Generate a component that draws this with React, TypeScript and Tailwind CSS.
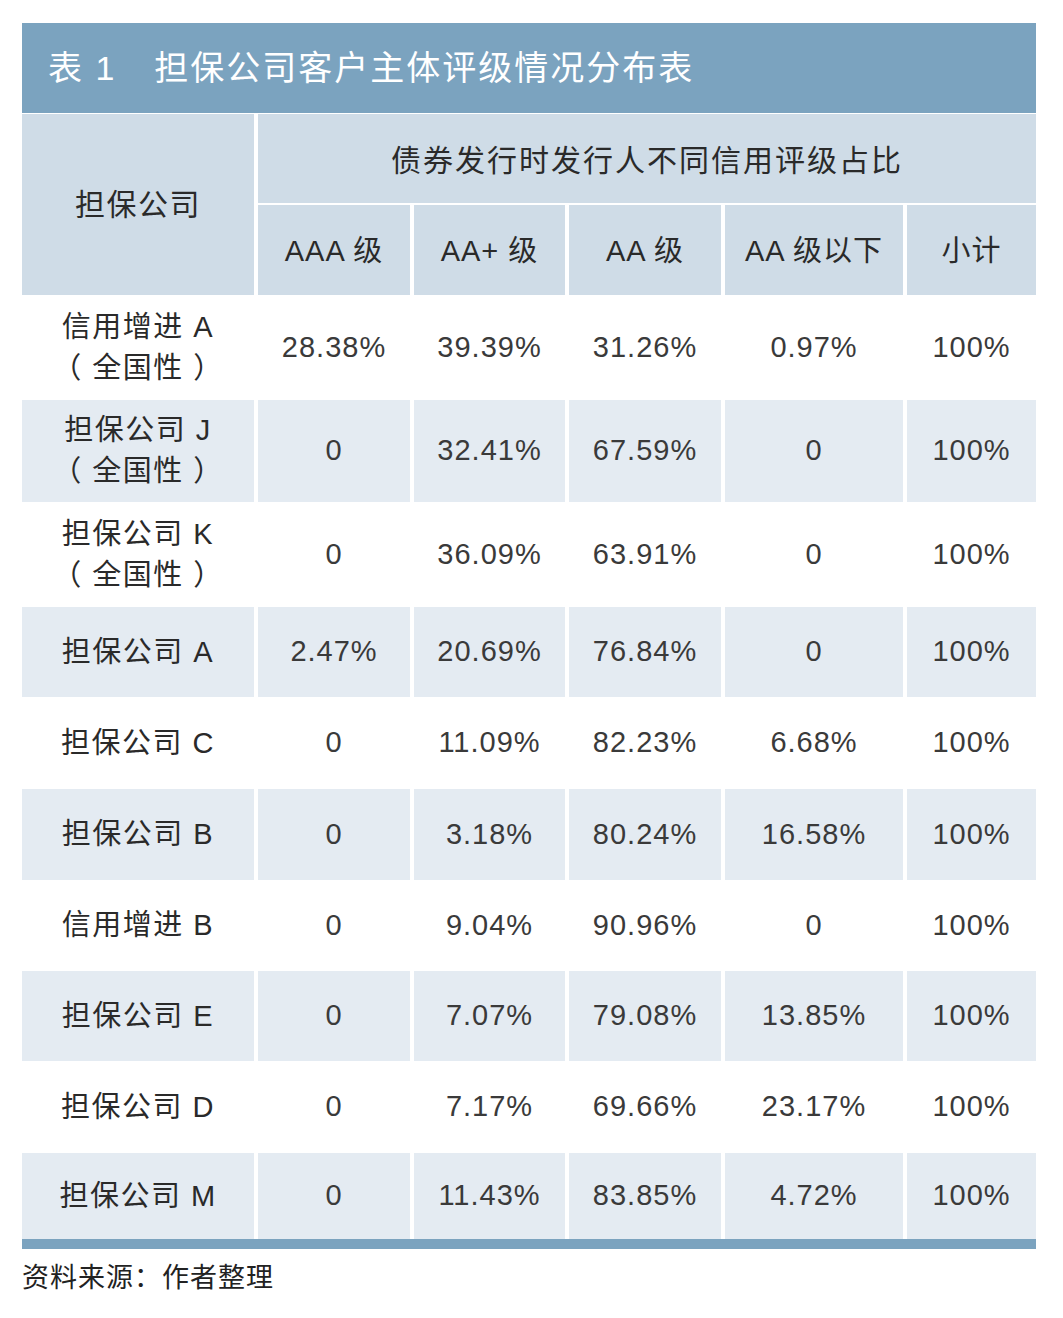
import React from 'react';

const font = { fontFamily: '"Liberation Sans", "Noto Sans CJK SC", sans-serif' };

type Row = { name: string[]; cells: string[]; h: string; gray: boolean };

const rows: Row[] = [
  { name: ['信用增进 A', '（ 全国性 ）'], cells: ['28.38%', '39.39%', '31.26%', '0.97%', '100%'], h: 'h-[105px]', gray: false },
  { name: ['担保公司 J', '（ 全国性 ）'], cells: ['0', '32.41%', '67.59%', '0', '100%'], h: 'h-[102px]', gray: true },
  { name: ['担保公司 K', '（ 全国性 ）'], cells: ['0', '36.09%', '63.91%', '0', '100%'], h: 'h-[105px]', gray: false },
  { name: ['担保公司 A'], cells: ['2.47%', '20.69%', '76.84%', '0', '100%'], h: 'h-[90px]', gray: true },
  { name: ['担保公司 C'], cells: ['0', '11.09%', '82.23%', '6.68%', '100%'], h: 'h-[92px]', gray: false },
  { name: ['担保公司 B'], cells: ['0', '3.18%', '80.24%', '16.58%', '100%'], h: 'h-[91px]', gray: true },
  { name: ['信用增进 B'], cells: ['0', '9.04%', '90.96%', '0', '100%'], h: 'h-[91px]', gray: false },
  { name: ['担保公司 E'], cells: ['0', '7.07%', '79.08%', '13.85%', '100%'], h: 'h-[90px]', gray: true },
  { name: ['担保公司 D'], cells: ['0', '7.17%', '69.66%', '23.17%', '100%'], h: 'h-[92px]', gray: false },
  { name: ['担保公司 M'], cells: ['0', '11.43%', '83.85%', '4.72%', '100%'], h: 'h-[86px]', gray: true },
];

const subHeads = ['AAA 级', 'AA+ 级', 'AA 级', 'AA 级以下', '小计'];

export default function App() {
  return (
    <div className="min-h-[1318px] bg-white pt-[23px] pl-[22px]" style={font}>
      <div className="w-[1014px]">
        {/* 标题栏 */}
        <div className="h-[90px] bg-[#7ba3bf] flex items-center pl-[26px] text-white text-[34px] tracking-[2px]">
          <span>表 1</span>
          <span className="ml-[38px]">担保公司客户主体评级情况分布表</span>
        </div>

        {/* 表头 */}
        <div className="mt-[1px] grid grid-cols-[232px_152px_151px_152px_178px_129px] gap-x-[4px] text-[#2a2a2a] text-[29px] tracking-[1px]">
          <div className="row-span-2 bg-[#cfdce7] flex items-center justify-center text-[30px] tracking-[1.5px]">担保公司</div>
          <div className="col-span-5 h-[89px] pt-[4px] bg-[#cfdce7] flex items-center justify-center text-[30px] tracking-[2px]">
            债券发行时发行人不同信用评级占比
          </div>
          {subHeads.map((s) => (
            <div key={s} className="h-[90px] mt-[2px] pt-[3px] bg-[#cfdce7] flex items-center justify-center">
              {s}
            </div>
          ))}

          {/* 数据行 */}
          {rows.map((r) => (
            <React.Fragment key={r.name[0]}>
              <div
                className={`${r.h} ${r.gray ? 'bg-[#e4ebf2]' : 'bg-white'} flex flex-col items-center justify-center leading-[41px] tracking-[1.5px]`}
              >
                {r.name.map((n) => (
                  <span key={n}>{n}</span>
                ))}
              </div>
              {r.cells.map((c, i) => (
                <div
                  key={i}
                  className={`${r.h} ${r.gray ? 'bg-[#e4ebf2]' : 'bg-white'} flex items-center justify-center text-[#3a3a3a]`}
                >
                  {c}
                </div>
              ))}
            </React.Fragment>
          ))}
        </div>
        <div className="h-[10px] bg-[#7ba3bf]" />
        <div className="mt-[13px] text-[27px] text-[#222] tracking-[1px] leading-[32px]">资料来源：作者整理</div>
      </div>
    </div>
  );
}
